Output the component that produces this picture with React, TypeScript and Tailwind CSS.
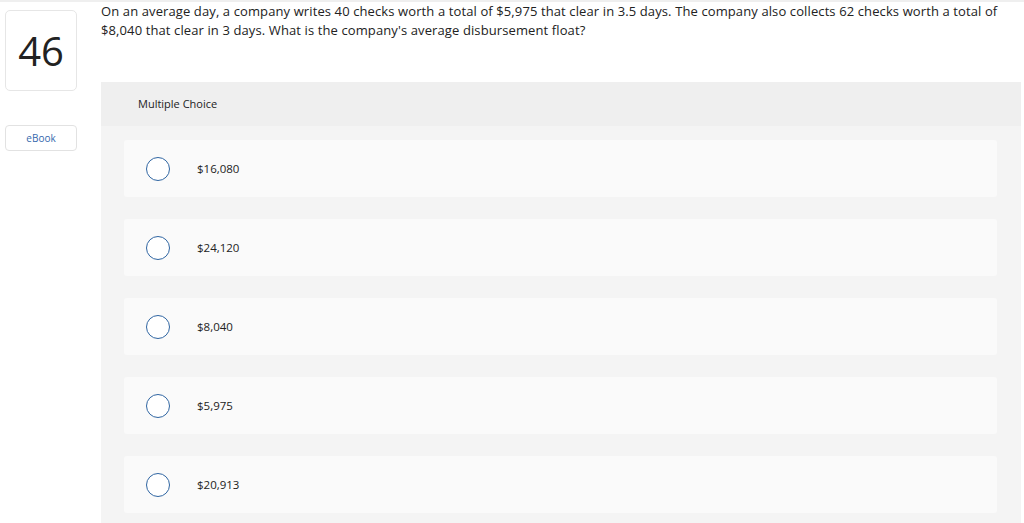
export default function App() {
  const choices = ['$16,080', '$24,120', '$8,040', '$5,975', '$20,913'];

  return (
    <div
      className="w-[1024px] h-[523px] overflow-hidden bg-white border-t-2 border-[#efefef] text-[#222]"
      style={{ fontFamily: '"Open Sans", "Liberation Sans", sans-serif' }}
    >
      <div className="flex pl-[5px] pr-[3px]">
        <div className="w-[72px] shrink-0 pt-[8px] flex flex-col">
          <div className="h-[81px] rounded-[5px] border border-[#e6e6e6] flex items-center justify-center text-[40px] text-[#222]">
            46
          </div>
          <div className="mt-[34px] h-[26px] rounded-[4px] border border-[#e2e2e2] flex items-center justify-center text-[10px] text-[#3569ae]">
            eBook
          </div>
        </div>
        <div className="ml-[24px] flex-1">
          <p className="text-[13px] leading-[19px] tracking-[0.11px] pr-[16px]">
            On an average day, a company writes 40 checks worth a total of $5,975 that clear in 3.5 days. The company also collects 62 checks worth a total of $8,040 that clear in 3 days. What is the company's average disbursement float?
          </p>
          <div className="mt-[42px] bg-[#f4f4f4]">
            <div className="h-[44px] bg-[#efefef] flex items-center pl-[37px] text-[11px]">
              Multiple Choice
            </div>
            <div className="pl-[23px] pr-[24px] pt-[14px] flex flex-col gap-[22px] pb-[10px]">
              {choices.map((c) => (
                <div key={c} className="h-[57px] bg-[#fafafa] rounded-[3px] flex items-center pl-[22px]">
                  <span className="w-[24px] h-[24px] rounded-full border border-[#2f65a2] bg-white" />
                  <span className="ml-[27px] text-[11.5px]">{c}</span>
                </div>
              ))}
            </div>
          </div>
        </div>
      </div>
    </div>
  );
}
